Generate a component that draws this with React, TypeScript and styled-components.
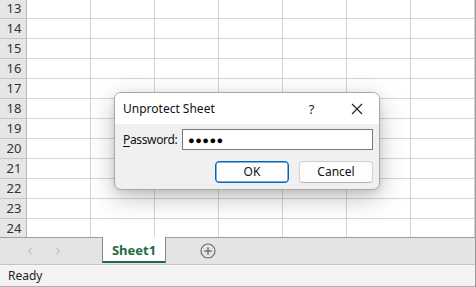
import React from "react";
import styled, { createGlobalStyle } from "styled-components";

const Global = createGlobalStyle`
  html, body { margin: 0; padding: 0; background: #ffffff; }
  body { font-family: "Segoe UI", "Noto Sans", "Open Sans", sans-serif; }
  * { box-sizing: border-box; }
`;

const Window = styled.div`
  position: relative;
  width: 476px;
  height: 287px;
  overflow: hidden;
  display: flex;
  flex-direction: column;
  background: #ffffff;
  border-right: 1px solid #9a9a9a;
`;

const GridArea = styled.div`
  height: 237px;
  overflow: hidden;
  flex: none;
`;

const GridInner = styled.div`
  margin-top: -1px;
  display: flex;
  flex-direction: column;
`;

const Row = styled.div`
  display: grid;
  grid-template-columns: 27px repeat(7, 64px);
  height: 20px;
`;

const RowHeader = styled.div`
  background: #e6e6e6;
  border-right: 1px solid #b9b9b9;
  border-bottom: 1px solid #c6c6c6;
  color: #333;
  font-size: 13px;
  line-height: 19px;
  text-align: center;
  padding-left: 2px;
`;

const Cell = styled.div`
  border-right: 1px solid #d4d4d4;
  border-bottom: 1px solid #d4d4d4;
`;

const TabBar = styled.div`
  height: 28px;
  flex: none;
  background: #e4e4e4;
  border-top: 1px solid #9f9f9f;
  border-bottom: 1px solid #c4c4c4;
  display: flex;
  align-items: stretch;
`;

const NavArea = styled.div`
  width: 102px;
  display: flex;
  align-items: center;
  padding-left: 26px;
  gap: 20px;
  color: #c2c2c2;
`;

const Tab = styled.div`
  margin-top: -1px;
  width: 64px;
  height: 26px;
  background: #ffffff;
  border-left: 1px solid #8a8a8a;
  border-right: 1px solid #8a8a8a;
  border-bottom: 2px solid #1e6b43;
  color: #1e6b43;
  font-weight: 700;
  font-size: 13px;
  display: flex;
  align-items: center;
  justify-content: center;
  padding-top: 1px;
`;

const AddArea = styled.div`
  width: 84px;
  display: flex;
  align-items: center;
  justify-content: center;
`;

const StatusBar = styled.div`
  flex: 1;
  background: #f3f3f3;
  font-size: 12px;
  color: #222;
  display: flex;
  align-items: center;
  padding-left: 8px;
  padding-bottom: 1px;
  border-bottom: 1px solid #b0b0b0;
`;

const Dialog = styled.div`
  position: absolute;
  left: 114px;
  top: 92px;
  width: 266px;
  height: 98px;
  border-radius: 7px;
  background: #f0f0f0;
  border: 1px solid #a8a8a8;
  box-shadow: 0 8px 26px rgba(0, 0, 0, 0.24), 0 2px 6px rgba(0, 0, 0, 0.1);
  display: flex;
  flex-direction: column;
  overflow: hidden;
`;

const TitleBar = styled.div`
  height: 31px;
  background: #ffffff;
  display: flex;
  align-items: center;
  padding-left: 8px;
  font-size: 12px;
  color: #111;
`;

const Title = styled.div`
  flex: 1;
  padding-bottom: 1px;
`;

const TitleButton = styled.div`
  width: 45px;
  height: 100%;
  display: flex;
  align-items: center;
  justify-content: center;
  font-size: 13px;
  color: #222;
`;

const Body = styled.div`
  flex: 1;
  display: flex;
  flex-direction: column;
  padding: 5px 6px 0 8px;
`;

const FieldRow = styled.div`
  display: flex;
  align-items: center;
  gap: 8px;
  height: 21px;
`;

const Label = styled.label`
  width: 51px;
  white-space: nowrap;
  font-size: 12px;
  letter-spacing: -0.35px;
  color: #111;
  u { text-decoration-thickness: 1px; text-underline-offset: 2px; }
`;

const Input = styled.div`
  width: 191px;
  height: 21px;
  background: #fff;
  border: 1px solid #7a7a7a;
  font-size: 11px;
  letter-spacing: 0.5px;
  color: #000;
  display: flex;
  align-items: center;
  padding-left: 5px;
`;

const ButtonRow = styled.div`
  display: flex;
  justify-content: flex-end;
  gap: 10px;
  margin-top: 11px;
  padding-right: 0;
`;

const Button = styled.div<{ $primary?: boolean }>`
  width: 74px;
  height: 22px;
  border-radius: 4px;
  background: #fdfdfd;
  border: 1px solid ${(p) => (p.$primary ? "#0067c0" : "#cfcfcf")};
  ${(p) => (p.$primary ? "box-shadow: inset 0 0 0 0.5px #0067c0;" : "border-bottom-color: #b5b5b5;")}
  font-size: 12px;
  color: #111;
  display: flex;
  align-items: center;
  justify-content: center;
  padding-bottom: 1px;
`;

const rows = [13, 14, 15, 16, 17, 18, 19, 20, 21, 22, 23, 24];

export default function App() {
  return (
    <>
      <Global />
      <Window>
        <GridArea>
          <GridInner>
            {rows.map((r) => (
              <Row key={r}>
                <RowHeader>{r}</RowHeader>
                {Array.from({ length: 7 }).map((_, i) => (
                  <Cell key={i} />
                ))}
              </Row>
            ))}
          </GridInner>
        </GridArea>
        <TabBar>
          <NavArea>
            <svg width="8" height="10" viewBox="0 0 8 10">
              <path d="M5.5 2 L2.5 5 L5.5 8" fill="none" stroke="#c4c4c4" strokeWidth="1.3" />
            </svg>
            <svg width="8" height="10" viewBox="0 0 8 10">
              <path d="M2.5 2 L5.5 5 L2.5 8" fill="none" stroke="#c4c4c4" strokeWidth="1.3" />
            </svg>
          </NavArea>
          <Tab>Sheet1</Tab>
          <AddArea>
            <svg width="16" height="16" viewBox="0 0 16 16">
              <circle cx="8" cy="8" r="7" fill="none" stroke="#6e6e6e" strokeWidth="1.2" />
              <path d="M8 4.2 V11.8 M4.2 8 H11.8" stroke="#6e6e6e" strokeWidth="1.4" />
            </svg>
          </AddArea>
        </TabBar>
        <StatusBar>Ready</StatusBar>
        <Dialog>
          <TitleBar>
            <Title>Unprotect Sheet</Title>
            <TitleButton>?</TitleButton>
            <TitleButton>
              <svg width="12" height="12" viewBox="0 0 12 12">
                <path d="M1 1 L11 11 M11 1 L1 11" stroke="#222" strokeWidth="1.1" />
              </svg>
            </TitleButton>
          </TitleBar>
          <Body>
            <FieldRow>
              <Label>
                <u>P</u>assword:
              </Label>
              <Input>●●●●●</Input>
            </FieldRow>
            <ButtonRow>
              <Button $primary>OK</Button>
              <Button>Cancel</Button>
            </ButtonRow>
          </Body>
        </Dialog>
      </Window>
    </>
  );
}
